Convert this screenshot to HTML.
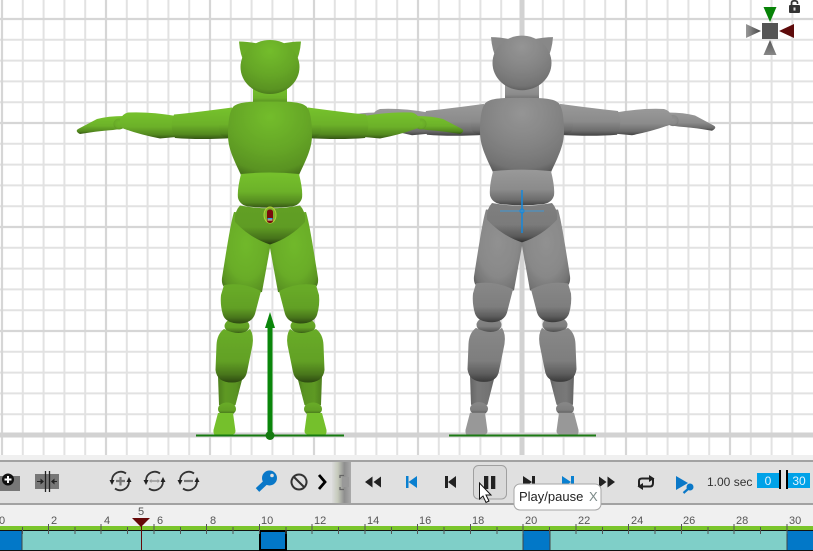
<!DOCTYPE html>
<html lang="en"><head><meta charset="utf-8"><title>Timeline</title>
<style>
html,body{margin:0;padding:0;background:#fff}
svg{display:block}
text{font-family:"Liberation Sans",sans-serif}
</style></head>
<body>
<svg width="813" height="551" viewBox="0 0 813 551" xmlns="http://www.w3.org/2000/svg">
<defs>
<radialGradient id="r" cx=".5" cy=".4" r=".7">
<stop offset="0" stop-color="#9c9c9c"/><stop offset=".6" stop-color="#929292"/><stop offset=".88" stop-color="#7c7c7c"/><stop offset="1" stop-color="#606060"/>
</radialGradient>
<radialGradient id="t" cx=".5" cy=".2" r=".85">
<stop offset="0" stop-color="#a0a0a0"/><stop offset=".55" stop-color="#8c8c8c"/><stop offset=".85" stop-color="#7c7c7c"/><stop offset="1" stop-color="#5c5c5c"/>
</radialGradient>
<linearGradient id="a" x1="0" y1="0" x2="0" y2="1">
<stop offset="0" stop-color="#a4a4a4"/><stop offset=".55" stop-color="#969696"/><stop offset=".85" stop-color="#747474"/><stop offset="1" stop-color="#484848"/>
</linearGradient>
<linearGradient id="k" x1="0" y1="0" x2="0" y2="1">
<stop offset="0" stop-color="#929292"/><stop offset=".6" stop-color="#888"/><stop offset=".85" stop-color="#646464"/><stop offset="1" stop-color="#3e3e3e"/>
</linearGradient>
<linearGradient id="c" x1="0" y1="0" x2="1" y2="0">
<stop offset="0" stop-color="#6c6c6c"/><stop offset=".3" stop-color="#828282"/><stop offset=".75" stop-color="#7c7c7c"/><stop offset="1" stop-color="#666"/>
</linearGradient>
<linearGradient id="pv" x1="0" y1="0" x2="0" y2="1">
<stop offset="0" stop-color="#888"/><stop offset=".55" stop-color="#848484"/><stop offset=".85" stop-color="#606060"/><stop offset="1" stop-color="#333"/>
</linearGradient>
<linearGradient id="handle" x1="0" y1="0" x2="1" y2="0">
<stop offset="0" stop-color="#dcdcdc"/><stop offset=".3" stop-color="#c6cabc"/><stop offset=".65" stop-color="#8e8e8e"/><stop offset="1" stop-color="#aaa"/>
</linearGradient>
<linearGradient id="gl" x1="0" y1="0" x2="1" y2="0">
<stop offset="0" stop-color="#999"/><stop offset="1" stop-color="#444"/>
</linearGradient>
<linearGradient id="gb" x1="0" y1="0" x2="0" y2="1">
<stop offset="0" stop-color="#555"/><stop offset="1" stop-color="#888"/>
</linearGradient>
<filter id="green" color-interpolation-filters="sRGB" x="-5%" y="-5%" width="110%" height="110%">
<feGaussianBlur stdDeviation=".35"/>
<feColorMatrix type="matrix" values=".72 0 0 0 0  0 1.18 0 0 0  0 .27 0 0 0  0 0 0 1 0"/>
</filter>
<filter id="dim" color-interpolation-filters="sRGB" x="-5%" y="-5%" width="110%" height="110%">
<feGaussianBlur stdDeviation=".35"/>
<feColorMatrix type="matrix" values=".93 0 0 0 0  0 .93 0 0 0  0 0 .93 0 0  0 0 0 1 0"/>
</filter>
<g id="limb">
<!-- arm -->
<path d="M80 134 Q74 131 79 128.500 L97 119 Q108 116 124 116 L126 128 L113 130 Q100 131 90 132.500Z" fill="url(#a)"/>
<circle cx="119" cy="124" r="5.500" fill="url(#r)"/>
<path d="M128 112.500 Q150 111.500 176 116 L176 137 L160 138.500 Q140 134.500 126 129.500 Q119 128 120 120 Q122 114 128 112.500Z" fill="url(#a)"/>
<path d="M174 114.500 Q195 112.500 232 107.500 L234 138 Q200 140 175 138 Q169 127 174 114.500Z" fill="url(#a)"/>
<path d="M236 108 Q224 108 221 113 Q217 124 220 134 Q223 138.500 236 138Z" fill="url(#a)"/>
<!-- leg -->
<path d="M234 212 C231 222 228 240 222 278 Q221 287 228 290 Q245 296 262 292 L270 248 L270 215Z" fill="url(#r)"/>
<ellipse cx="237" cy="326" rx="12.500" ry="8" fill="url(#k)"/>
<path d="M224 285 Q243 282 261 291 L255 314 Q252 323 240 323.500 Q226 323.500 223 315 Q220 305 221 295Z" fill="url(#k)"/>
<path d="M218 376 L243 376 L235.500 405 Q227 409 219 405Z" fill="url(#c)"/>
<path d="M224 329 Q240 337 250 329 Q254 335 252.500 345 L247 372 Q245 382.500 232 382.500 Q217 382.500 215.500 370 L216.500 345 Q217 334 224 329Z" fill="url(#k)"/>
<ellipse cx="227" cy="409" rx="9" ry="6.500" fill="url(#k)"/>
<path d="M218 413 L233 413 L235.500 431 Q235.500 435 230 435 L216 435 Q213 435 213.500 430Z" fill="#a3a3a3"/>
</g>
<g id="fig">
<path d="M239 41.500 Q248 41.500 260 44 L250 70 L245 64 Q240 55 239 41.500Z" fill="#929292"/>
<path d="M301 41.500 Q292 41.500 280 44 L290 70 L295 64 Q300 55 301 41.500Z" fill="#929292"/>
<rect x="253" y="88" width="34" height="18" fill="url(#a)"/>
<ellipse cx="270" cy="67" rx="29.500" ry="27" fill="url(#t)"/>
<use href="#limb"/>
<use href="#limb" transform="translate(540,0) scale(-1,1)"/>
<path d="M270 101.500 C248 101.500 238 102 233 107 C229 112 228 125 228 135 C228 148 233 158 241 175 Q270 179 299 175 C307 158 312 148 312 135 C312 125 311 112 307 107 C302 102 292 101.500 270 101.500Z" fill="url(#t)"/>
<path d="M241 174 Q270 171 299 174 Q303 190 302 198 Q300 205 292 206.500 Q270 209 248 206.500 Q240 205 238 198 Q237 190 241 174Z" fill="url(#a)"/>
<path d="M240 205.500 Q270 211 300 205.500 Q306 212 305 222 Q290 238 270 244.500 Q250 238 235 222 Q234 212 240 205.500Z" fill="url(#pv)"/>
</g>
</defs>

<!-- viewport -->
<rect width="813" height="460" fill="#fff"/>
<path fill="none" stroke="#e2e2e2" stroke-width="2" d="M22.800 0V455M43.600 0V455M64.400 0V455M85.200 0V455M126.800 0V455M147.600 0V455M168.400 0V455M189.200 0V455M230.800 0V455M251.600 0V455M272.400 0V455M293.200 0V455M334.800 0V455M355.600 0V455M376.400 0V455M397.200 0V455M438.800 0V455M459.600 0V455M480.400 0V455M501.200 0V455M542.800 0V455M563.600 0V455M584.400 0V455M605.200 0V455M646.800 0V455M667.600 0V455M688.400 0V455M709.200 0V455M750.800 0V455M771.600 0V455M792.400 0V455M0 39.800H813M0 60.600H813M0 81.400H813M0 102.200H813M0 143.800H813M0 164.600H813M0 185.400H813M0 206.200H813M0 247.800H813M0 268.600H813M0 289.400H813M0 310.200H813M0 351.800H813M0 372.600H813M0 393.400H813M0 414.200H813"/>
<path fill="none" stroke="#d6d6d6" stroke-width="2.200" d="M2 0V455M106 0V455M210 0V455M314 0V455M418 0V455M626 0V455M730 0V455M0 19H813M0 123H813M0 227H813M0 331H813"/>
<rect x="519.500" y="0" width="5" height="455" fill="#d2d2d2"/>
<rect x="0" y="432.500" width="813" height="5" fill="#d2d2d2"/>

<!-- gray figure -->
<g filter="url(#dim)"><g transform="translate(252,-4.785) scale(1,1.011)"><use href="#fig"/></g></g>
<path d="M449 435.500H596" stroke="#1c7a14" stroke-width="2"/>
<path d="M522 190V233" stroke="#1488dc" stroke-width="1.500"/>
<path d="M500 211H544" stroke="#3f97d4" stroke-width="1"/>
<circle cx="522" cy="211" r="2" fill="none" stroke="#1488dc"/>

<!-- green figure -->
<g filter="url(#green)"><use href="#fig"/></g>
<ellipse cx="270" cy="215" rx="6" ry="8" fill="#7fb52c" stroke="#b5d23a" stroke-width="1"/>
<rect x="267" y="209.500" width="6" height="13.500" rx="2.500" fill="#7a0c0c"/>
<rect x="267.500" y="218" width="5" height="1.300" fill="#2aa0dc"/>
<rect x="267.500" y="219.500" width="5" height="1" fill="#e5e5c0"/>
<path d="M270 312L275 328H272.500V435H267.500V328H265Z" fill="#0a860a"/>
<path d="M196 435.500H344" stroke="#157a10" stroke-width="2"/>
<circle cx="270" cy="435.500" r="4.500" fill="#157a10"/>

<!-- gizmo -->
<rect x="762" y="23" width="16" height="16" fill="#555"/>
<path d="M763.500 7H776.500L770 22Z" fill="#078207"/>
<path d="M746 24L761 31L746 38Z" fill="url(#gl)"/>
<path d="M794 24L779 31L794 38Z" fill="#5e0b0b"/>
<path d="M770 40L776.500 55H763.500Z" fill="url(#gb)"/>
<!-- lock -->
<rect x="789" y="5" width="11" height="8" rx="1" fill="#333"/>
<path d="M791.500 5V3Q791.500 .8 794.500 .8Q797.500 .8 797.500 3V4" fill="none" stroke="#333" stroke-width="1.700"/>
<rect x="793.500" y="7.500" width="2" height="3" fill="#ddd"/>

<!-- panels -->
<rect y="455" width="813" height="6" fill="#f0f0f0"/>
<rect y="460" width="813" height="2" fill="#a2a2a2"/>
<rect y="462" width="813" height="41" fill="#e0e0e0"/>
<rect y="503" width="813" height="2" fill="#a2a2a2"/>
<rect y="505" width="813" height="21" fill="#f0f0f0"/>

<!-- left toolbar -->
<rect x="0" y="476" width="20" height="15" fill="#777"/>
<circle cx="8" cy="479.500" r="6" fill="#111"/>
<path d="M8 476V483M4.500 479.500H11.500" stroke="#fff" stroke-width="2"/>
<rect x="35" y="474" width="24" height="15" fill="#777"/>
<path d="M45.500 471V492M49.500 471V492" stroke="#222" stroke-width="1.300"/>
<path d="M37 481.500H43M57 481.500H52" stroke="#222" stroke-width="1"/>
<path d="M44 481.500L40.500 478.500V484.500ZM51 481.500L54.500 478.500V484.500Z" fill="#222"/>

<g fill="none" stroke="#333" stroke-width="1.800">
<path d="M112 480A8.800 8.800 0 0 1 126 473.500"/>
<path d="M129 482A8.800 8.800 0 0 1 115 488.500"/>
<path d="M146 480A8.800 8.800 0 0 1 160 473.500"/>
<path d="M163 482A8.800 8.800 0 0 1 149 488.500"/>
<path d="M180 480A8.800 8.800 0 0 1 194 473.500"/>
<path d="M197 482A8.800 8.800 0 0 1 183 488.500"/>
</g>
<path d="M109.500 480H114.500L112 485ZM126.500 482H131.500L129 477ZM143.500 480H148.500L146 485ZM160.500 482H165.500L163 477ZM177.500 480H182.500L180 485ZM194.500 482H199.500L197 477Z" fill="#222"/>
<path d="M120.500 477V485.500M116 481H125" stroke="#777" stroke-width="2.200" fill="none"/>
<path d="M151.500 481H157.500" stroke="#999" stroke-width="1.500"/>
<path d="M149 481L151.500 479V483ZM160 481L157.500 479V483Z" fill="#999"/>
<path d="M184 481H193" stroke="#777" stroke-width="2.200"/>

<!-- key -->
<circle cx="269.500" cy="478" r="7.500" fill="#0a78c8"/>
<circle cx="272" cy="475.500" r="1.800" fill="#e0e0e0"/>
<path d="M266 482L257.500 490" stroke="#0a78c8" stroke-width="5"/>
<path d="M299 474.500a7.500 7.500 0 1 0 .01 0Z" fill="none" stroke="#333" stroke-width="2"/>
<path d="M294 477L304 487" stroke="#333" stroke-width="2"/>
<path d="M319 475L325 482L319 489" fill="none" stroke="#000" stroke-width="2.800"/>

<!-- handle -->
<rect x="332" y="462" width="19" height="41" fill="url(#handle)"/>
<path d="M344 475.500H340V478M344 489.500H340V487" fill="none" stroke="#666" stroke-width="1.300"/>
<rect x="342" y="477" width="7" height="10" fill="#999"/>

<!-- transport -->
<path d="M365 482L372.500 476.500V487.500ZM373.500 482L381 476.500V487.500Z" fill="#222"/>
<path d="M406 476H408.500V488H406ZM408.500 482L417 476V488Z" fill="#0a80d0"/>
<path d="M445 476H448V488H445ZM448 482L456 476V488Z" fill="#222"/>
<rect x="473.500" y="465.500" width="33" height="33.500" rx="5" fill="#dadada" stroke="#a0a0a0"/>
<rect x="484" y="476" width="4.300" height="13" fill="#222"/>
<rect x="491" y="476" width="4.300" height="13" fill="#222"/>
<path d="M523 476L532 482L523 488ZM532 476H535V488H532Z" fill="#222"/>
<path d="M562 476L571 482L562 488ZM571 476H574V488H571Z" fill="#0a80d0"/>
<path d="M599 476.500L606.500 482L599 487.500ZM607.500 476.500L615 482L607.500 487.500Z" fill="#222"/>
<!-- loop -->
<path d="M639 486V481Q639 478.500 642 478.500H650M653 478V483Q653 486.500 650 486.500H642" fill="none" stroke="#222" stroke-width="2"/>
<path d="M649 475L654.500 478.500L649 482ZM643 483L637.500 486.500L643 490Z" fill="#222"/>
<!-- play key -->
<path d="M676 476L688 483L676 490Z" fill="#0a78c8"/>
<circle cx="690" cy="487" r="3.500" fill="#0a78c8"/>
<path d="M688 489L683.500 493" stroke="#0a78c8" stroke-width="2.200"/>
<text x="707" y="486" font-size="12" fill="#333">1.00 sec</text>
<rect x="757" y="473" width="22" height="15" fill="#00a2e8"/>
<rect x="788" y="473" width="22" height="15" fill="#00a2e8"/>
<rect x="779" y="470" width="2" height="19" fill="#000"/>
<rect x="786" y="470" width="2" height="19" fill="#000"/>
<text x="768" y="485" font-size="12" fill="#e4f4ff" text-anchor="middle">0</text>
<text x="799" y="485" font-size="12" fill="#e4f4ff" text-anchor="middle">30</text>

<!-- timeline -->
<rect y="526" width="813" height="4" fill="#7ac52b"/>
<rect y="531" width="813" height="19" fill="#7fcfc8"/>
<rect y="530" width="813" height="1" fill="#111"/>
<rect y="550" width="813" height="1" fill="#111"/>
<rect x="0" y="531" width="22" height="19" fill="#0278c8"/>
<rect x="523" y="531" width="27" height="19" fill="#0278c8"/>
<rect x="787" y="531" width="26" height="19" fill="#0278c8"/>
<rect x="260" y="531" width="26" height="19" fill="#0278c8" stroke="#000" stroke-width="2"/>
<path d="M22 531V550M523 531V550M550 531V550M787 531V550" stroke="#444" stroke-width="1"/>
<path d="M48.500 524V534M101 524V534M154 524V534M206.500 524V534M259.500 524V534M312 524V534M365 524V534M417.500 524V534M470.500 524V534M523 524V534M576 524V534M628.500 524V534M681.500 524V534M734 524V534M787 524V534" stroke="#555" stroke-width="1"/>
<path d="M22.500 527V534M75 527V534M127.500 527V534M180.500 527V534M233 527V534M286 527V534M338.500 527V534M391.500 527V534M444 527V534M497 527V534M549.500 527V534M602.500 527V534M655 527V534M708 527V534M760.500 527V534" stroke="#555" stroke-width="1"/>
<g font-size="11" fill="#555">
<text x="-1" y="524">0</text><text x="51" y="524">2</text><text x="104" y="524">4</text><text x="157" y="524">6</text><text x="210" y="524">8</text><text x="261" y="524">10</text><text x="314" y="524">12</text><text x="367" y="524">14</text><text x="419" y="524">16</text><text x="472" y="524">18</text><text x="525" y="524">20</text><text x="578" y="524">22</text><text x="631" y="524">24</text><text x="683" y="524">26</text><text x="736" y="524">28</text><text x="789" y="524">30</text>
<text x="141" y="515" text-anchor="middle">5</text>
</g>
<path d="M132 518H150L141 527Z" fill="#660808"/>
<path d="M141.500 526V550" stroke="#660808" stroke-width="1"/>

<!-- tooltip -->
<rect x="514" y="484" width="87" height="26" rx="6" fill="#fff" stroke="#a6a6a6"/>
<text x="519" y="501" font-size="13" fill="#222">Play/pause</text>
<text x="589" y="501" font-size="13" fill="#7c8a88">X</text>

<!-- cursor -->
<path d="M479.500 483V499L483 496L486 502.500L489 501L486 495H491Z" fill="#fff" stroke="#111" stroke-width="1"/>
</svg>
</body></html>
